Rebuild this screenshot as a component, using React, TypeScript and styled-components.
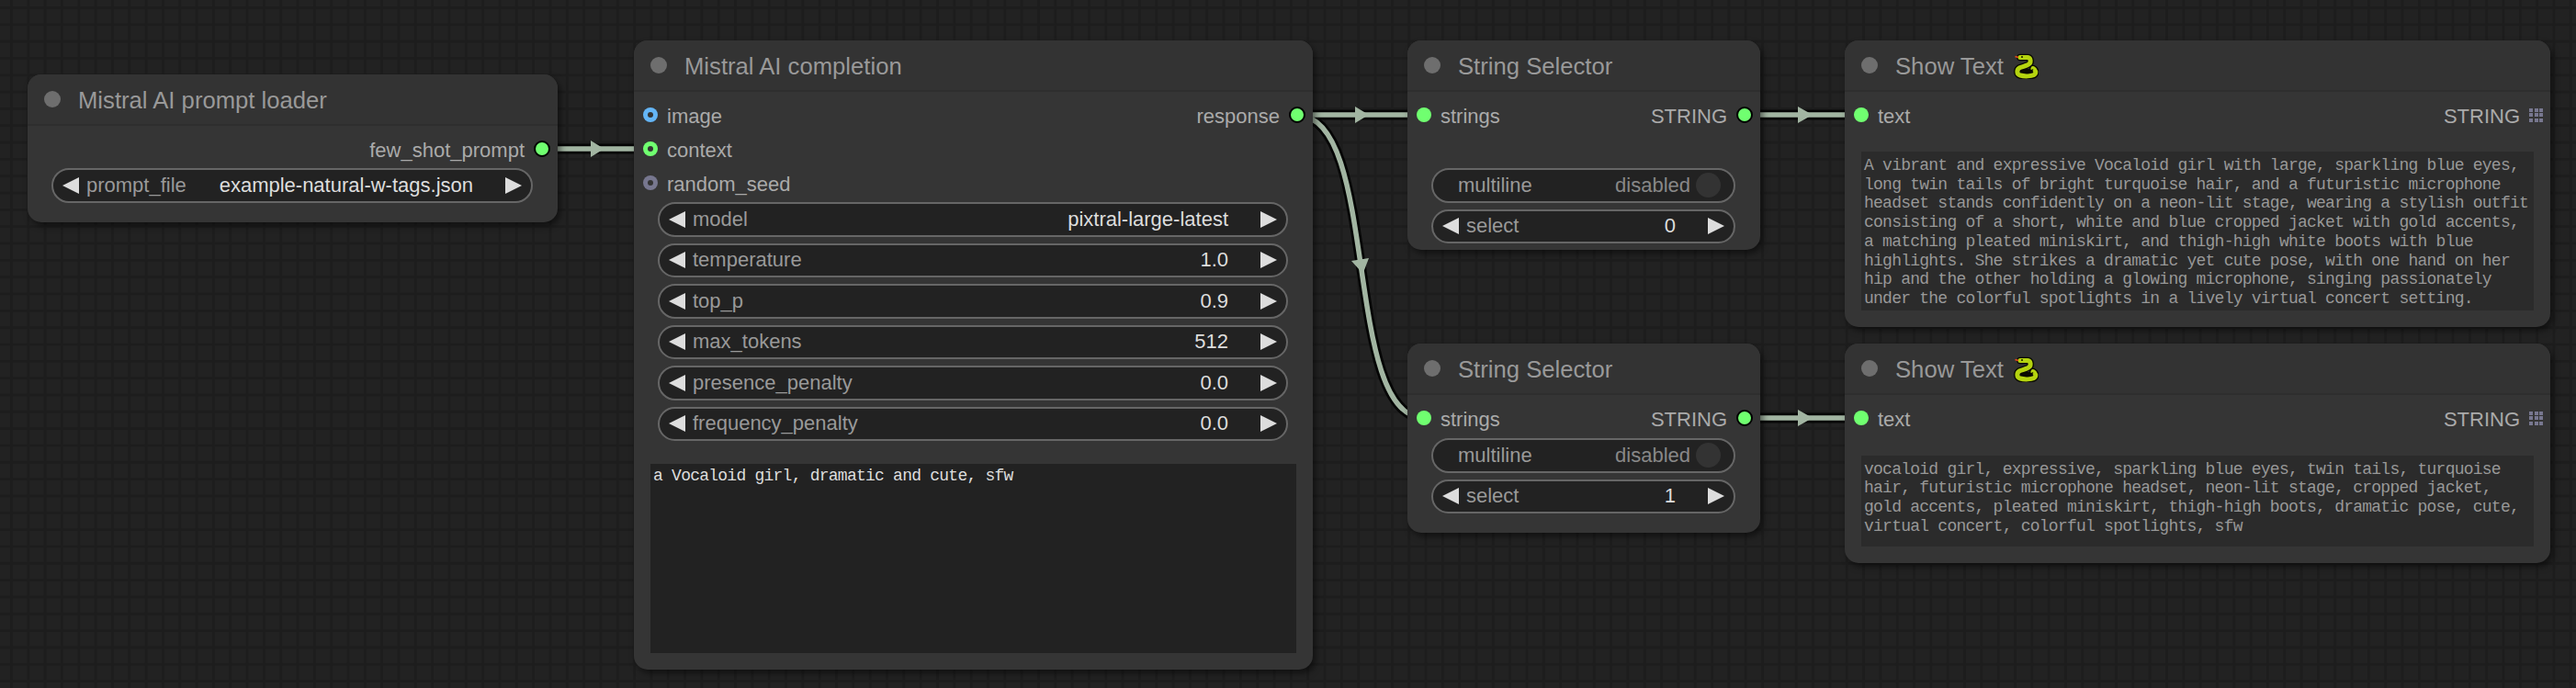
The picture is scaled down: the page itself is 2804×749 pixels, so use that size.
import styled, { createGlobalStyle } from 'styled-components';

const GlobalStyle = createGlobalStyle`
  html, body {
    margin: 0;
    background: #212121;
    overflow: hidden;
  }
`;

const Canvas = styled.div`
  position: relative;
  width: 2804px;
  height: 749px;
  overflow: hidden;
  font-family: "Liberation Sans", Arial, sans-serif;
  background-color: #222222;
  background-image:
    linear-gradient(#1d1d1d 3px, transparent 3px),
    linear-gradient(90deg, #1d1d1d 3px, transparent 3px);
  background-size: 18.33px 18.33px;
  background-position: 11px 7px;
`;

const Wires = styled.svg`
  position: absolute;
  left: 0;
  top: 0;
`;

const StyledNode = styled.div<{ $x: number; $y: number; $w: number; $pb: number }>`
  position: absolute;
  left: ${p => p.$x}px;
  top: ${p => p.$y}px;
  width: ${p => p.$w}px;
  padding-bottom: ${p => p.$pb}px;
  box-sizing: border-box;
  background: #353535;
  border-radius: 15px;
  box-shadow: 3px 4px 7px rgba(0, 0, 0, 0.5);
`;

const Header = styled.div`
  display: flex;
  align-items: center;
  box-sizing: border-box;
  height: 56px;
  padding-left: 18px;
  background: #333333;
  border-radius: 15px 15px 0 0;
  border-bottom: 2px solid #2e2e2e;
`;

const HeaderDot = styled.span`
  width: 18px;
  height: 18px;
  border-radius: 50%;
  background: #6e6e6e;
  margin-right: 19px;
  flex-shrink: 0;
`;

const Title = styled.span`
  font-size: 25.67px;
  padding-top: 2px;
  color: #999999;
  white-space: nowrap;
`;

const Snake = styled.svg`
  margin-left: 11px;
  margin-top: 2px;
`;

const Rows = styled.div`
  padding-top: 6.5px;
`;

const Row = styled.div`
  display: flex;
  align-items: center;
  justify-content: space-between;
  height: 37px;
  padding: 0 8px 0 10px;
`;

const Port = styled.div`
  display: flex;
  align-items: center;
  gap: 10px;
`;

const PortLabel = styled.span`
  font-size: 22px;
  color: #aaaaaa;
  padding-top: 4px;
  white-space: nowrap;
`;

const Slot = styled.span<{ $color: string; $hollow?: boolean; $ring?: boolean }>`
  display: block;
  box-sizing: content-box;
  width: ${p => (p.$ring ? 14 : 16)}px;
  height: ${p => (p.$ring ? 14 : 16)}px;
  border-radius: 50%;
  background: ${p => p.$color};
  border: ${p => (p.$ring ? '2px solid #000000' : 'none')};
  position: relative;

  ${p => p.$hollow && `
    &::after {
      content: "";
      position: absolute;
      left: 5px;
      top: 5px;
      width: 6px;
      height: 6px;
      border-radius: 50%;
      background: #333333;
    }
  `}
`;

const GridHandle = styled.span`
  display: grid;
  grid-template-columns: repeat(3, 4px);
  grid-auto-rows: 4px;
  gap: 1.5px;
  margin-right: 0;

  i {
    background: #77778f;
  }
`;

const Widgets = styled.div<{ $mt: number }>`
  display: flex;
  flex-direction: column;
  gap: 7px;
  margin: ${p => p.$mt}px 27px 0 26px;
`;

const Pill = styled.div`
  display: flex;
  align-items: center;
  box-sizing: border-box;
  height: 37.5px;
  padding: 0 10px;
  background: #222222;
  border: 2px solid #666666;
  border-radius: 19px;
  font-size: 22px;
`;

const PillLabel = styled.span`
  flex: 1;
  margin-left: 8px;
  color: #999999;
  white-space: nowrap;
`;

const PillValue = styled.span`
  margin-right: 35px;
  color: #dddddd;
  white-space: nowrap;
`;

const Arrow = styled.span<{ $dir: 'left' | 'right' }>`
  width: 0;
  height: 0;
  flex-shrink: 0;
  border-top: 9.5px solid transparent;
  border-bottom: 9.5px solid transparent;
  ${p => (p.$dir === 'left'
    ? 'border-right: 18px solid #dddddd;'
    : 'border-left: 18px solid #dddddd;')}
`;

const ToggleLabel = styled.span`
  flex: 1;
  margin-left: 17px;
  color: #999999;
`;

const ToggleState = styled.span`
  color: #888888;
  margin-right: 6px;
`;

const ToggleKnob = styled.span`
  width: 27px;
  height: 27px;
  border-radius: 50%;
  background: #333333;
  margin-right: 4px;
`;

const TextArea = styled.div<{ $h: number; $mt: number; $dim?: boolean }>`
  box-sizing: border-box;
  height: ${p => p.$h}px;
  margin: ${p => p.$mt}px 18px 0 18px;
  padding: ${p => (p.$dim ? 5 : 3)}px 3px 0 3px;
  background: ${p => (p.$dim ? '#2b2b2b' : '#222222')};
  color: ${p => (p.$dim ? '#989898' : '#dddddd')};
  font-family: "Liberation Mono", "DejaVu Sans Mono", monospace;
  font-size: 18px;
  letter-spacing: -0.76px;
  line-height: 20.7px;
  white-space: pre-wrap;
`;

type SlotInfo = { label: string; color: string; hollow?: boolean };

const snakeBody = 'M7 4.5 H15 C18 4.5 18.5 8 18 10 C17 13.5 10 14 6 16 C3 18 3 23 7 24 C12 25.5 19 25 22 23.5 C25 21.5 24 18 21 16.5';

const SnakeIcon = () => (
  <Snake width="27" height="28" viewBox="0 0 27 28">
    <path d={snakeBody} fill="none" stroke="#0a0a00" strokeWidth="7.6" strokeLinecap="round" strokeLinejoin="round" />
    <path d="M8 17 L20 17 L20 22 L8 22 Z" fill="#0a0a00" />
    <path d={snakeBody} fill="none" stroke="#b5d40f" strokeWidth="5" strokeLinecap="round" strokeLinejoin="round" />
    <path d="M8.5 19.5 C11 21 17 21 20.5 18" fill="none" stroke="#0a0a00" strokeWidth="1.5" strokeLinecap="round" />
    <path d="M1.5 3.5 L5 4.5" fill="none" stroke="#e8481c" strokeWidth="1.6" />
    <circle cx="9" cy="4" r="1" fill="#1a1a00" />
  </Snake>
);

const NodeHeader = ({ title, snake }: { title: string; snake?: boolean }) => (
  <Header>
    <HeaderDot />
    <Title>{title}</Title>
    {snake && <SnakeIcon />}
  </Header>
);

const SlotRow = ({ input, output, handle }: { input?: SlotInfo; output?: string; handle?: boolean }) => (
  <Row>
    <Port>
      {input && <Slot $color={input.color} $hollow={input.hollow} />}
      {input && <PortLabel>{input.label}</PortLabel>}
    </Port>
    {output && (
      <Port>
        <PortLabel>{output}</PortLabel>
        {handle ? (
          <GridHandle>
            {Array.from({ length: 9 }).map((_, i) => <i key={i} />)}
          </GridHandle>
        ) : (
          <Slot $color="#70ff70" $ring />
        )}
      </Port>
    )}
  </Row>
);

const ComboWidget = ({ label, value }: { label: string; value: string }) => (
  <Pill>
    <Arrow $dir="left" />
    <PillLabel>{label}</PillLabel>
    <PillValue>{value}</PillValue>
    <Arrow $dir="right" />
  </Pill>
);

const ToggleWidget = () => (
  <Pill>
    <ToggleLabel>multiline</ToggleLabel>
    <ToggleState>disabled</ToggleState>
    <ToggleKnob />
  </Pill>
);

const GREEN = '#70ff70';
const WIRE = '#a2b5a2';

const straightWires = ['M590 162H708', 'M1413 125H1550', 'M1899 125H2026', 'M1899 455H2026'];
const curvedWire = 'M1413 126C1502 126 1461 455 1550 455';

const longText = 'A vibrant and expressive Vocaloid girl with large, sparkling blue eyes, long twin tails of bright turquoise hair, and a futuristic microphone headset stands confidently on a neon-lit stage, wearing a stylish outfit consisting of a short, white and blue cropped jacket with gold accents, a matching pleated miniskirt, and thigh-high white boots with blue highlights. She strikes a dramatic yet cute pose, with one hand on her hip and the other holding a glowing microphone, singing passionately under the colorful spotlights in a lively virtual concert setting.';
const tagText = 'vocaloid girl, expressive, sparkling blue eyes, twin tails, turquoise hair, futuristic microphone headset, neon-lit stage, cropped jacket, gold accents, pleated miniskirt, thigh-high boots, dramatic pose, cute, virtual concert, colorful spotlights, sfw';

const App = () => {
  return (
    <Canvas>
      <GlobalStyle />
      <Wires width="2804" height="749" viewBox="0 0 2804 749">
        {[...straightWires, curvedWire].map(d => (
          <path key={d} d={d} fill="none" stroke="#000000" strokeWidth="11" opacity="0.85" />
        ))}
        {[...straightWires, curvedWire].map(d => (
          <path key={d} d={d} fill="none" stroke={WIRE} strokeWidth="5.5" />
        ))}
        <polygon points="643,153 657.5,162 643,171" fill={WIRE} />
        <polygon points="1475,116 1490,125 1475,134" fill={WIRE} />
        <polygon points="1957,116 1973,125 1957,134" fill={WIRE} />
        <polygon points="1957,446 1973,455 1957,464" fill={WIRE} />
        <polygon points="1471,284 1490,281 1483.5,298" fill={WIRE} />
      </Wires>

      <StyledNode $x={30} $y={81} $w={577} $pb={21}>
        <NodeHeader title="Mistral AI prompt loader" />
        <Rows>
          <SlotRow output="few_shot_prompt" />
        </Rows>
        <Widgets $mt={2.5}>
          <ComboWidget label="prompt_file" value="example-natural-w-tags.json" />
        </Widgets>
      </StyledNode>

      <StyledNode $x={690} $y={44} $w={739} $pb={18}>
        <NodeHeader title="Mistral AI completion" />
        <Rows>
          <SlotRow input={{ label: 'image', color: '#64b5f6', hollow: true }} output="response" />
          <SlotRow input={{ label: 'context', color: GREEN, hollow: true }} />
          <SlotRow input={{ label: 'random_seed', color: '#77778f', hollow: true }} />
        </Rows>
        <Widgets $mt={2.5}>
          <ComboWidget label="model" value="pixtral-large-latest" />
          <ComboWidget label="temperature" value="1.0" />
          <ComboWidget label="top_p" value="0.9" />
          <ComboWidget label="max_tokens" value="512" />
          <ComboWidget label="presence_penalty" value="0.0" />
          <ComboWidget label="frequency_penalty" value="0.0" />
        </Widgets>
        <TextArea $h={206} $mt={25}>a Vocaloid girl, dramatic and cute, sfw</TextArea>
      </StyledNode>

      <StyledNode $x={1532} $y={44} $w={384} $pb={7}>
        <NodeHeader title="String Selector" />
        <Rows>
          <SlotRow input={{ label: 'strings', color: GREEN }} output="STRING" />
        </Rows>
        <Widgets $mt={39.5}>
          <ToggleWidget />
          <ComboWidget label="select" value="0" />
        </Widgets>
      </StyledNode>

      <StyledNode $x={2008} $y={44} $w={768} $pb={18}>
        <NodeHeader title="Show Text" snake />
        <Rows>
          <SlotRow input={{ label: 'text', color: GREEN }} output="STRING" handle />
        </Rows>
        <TextArea $h={173} $mt={21.5} $dim>{longText}</TextArea>
      </StyledNode>

      <StyledNode $x={1532} $y={374} $w={384} $pb={21}>
        <NodeHeader title="String Selector" />
        <Rows>
          <SlotRow input={{ label: 'strings', color: GREEN }} output="STRING" />
        </Rows>
        <Widgets $mt={3.5}>
          <ToggleWidget />
          <ComboWidget label="select" value="1" />
        </Widgets>
      </StyledNode>

      <StyledNode $x={2008} $y={374} $w={768} $pb={18}>
        <NodeHeader title="Show Text" snake />
        <Rows>
          <SlotRow input={{ label: 'text', color: GREEN }} output="STRING" handle />
        </Rows>
        <TextArea $h={99} $mt={22} $dim>{tagText}</TextArea>
      </StyledNode>
    </Canvas>
  );
};

export default App;
